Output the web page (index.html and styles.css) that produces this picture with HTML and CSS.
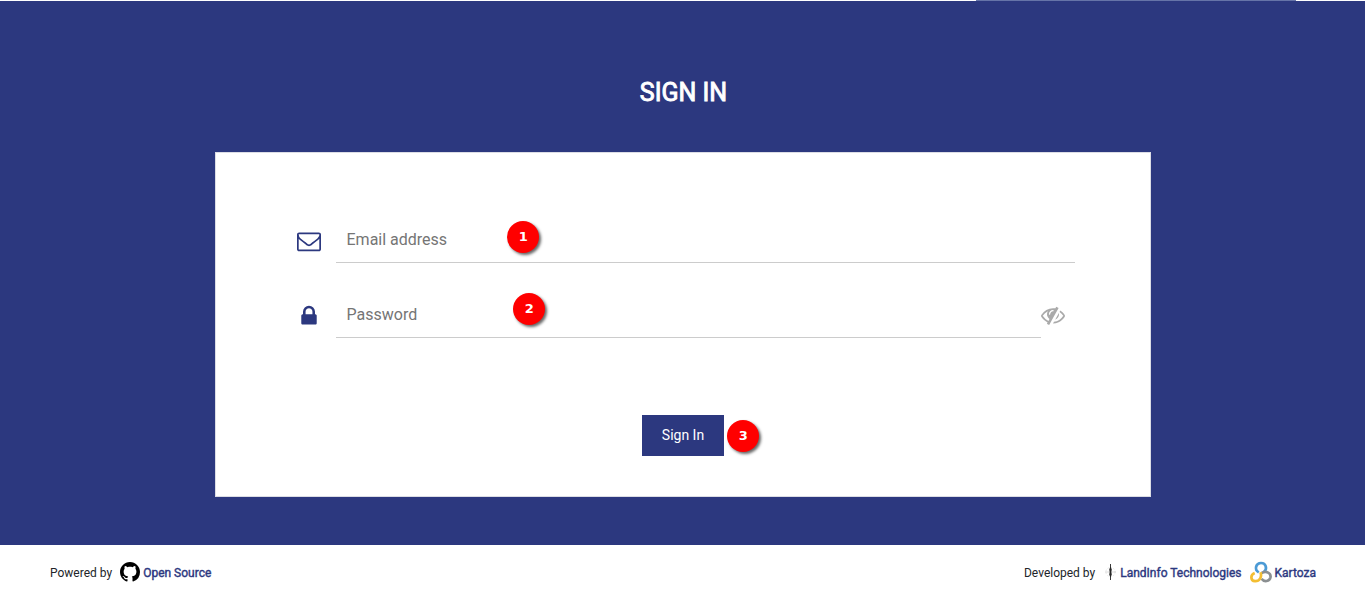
FILE: index.html
```html
<!DOCTYPE html>
<html lang="en">
<head>
<meta charset="utf-8">
<title>Sign In</title>
<link rel="stylesheet" href="styles.css">
</head>
<body>
<div class="topline"><div class="topline-mark"></div></div>
<main class="main">
  <h1 class="title">SIGN IN</h1>
  <form class="card">
    <div class="row">
      <svg class="icon icon-mail" viewBox="0 0 1792 1792"><path d="M1664 1504v-768q-32 36-69 66-268 206-426 338-51 43-83 67t-86.500 48.500-102.500 24.500h-2q-48 0-102.500-24.500t-86.500-48.500-83-67q-158-132-426-338-37-30-69-66v768q0 13 9.500 22.500t22.500 9.500h1472q13 0 22.500-9.500t9.500-22.500zm0-1051v-24.500l-.5-13-3-12.500-5.500-9-9-7.500-14-2.500h-1472q-13 0-22.500 9.500t-9.500 22.500q0 168 147 284 193 152 401 317 6 5 35 29.500t46 37.500 44.500 31.500 50.500 27.500 43 9h2q20 0 43-9t50.500-27.500 44.500-31.500 46-37.500 35-29.500q208-165 401-317 54-43 100.500-115.500t46.500-131.500zm128-37v1088q0 66-47 113t-113 47h-1472q-66 0-113-47t-47-113v-1088q0-66 47-113t113-47h1472q66 0 113 47t47 113z"/></svg>
      <div class="field"><input class="input" type="text" placeholder="Email address"></div>
    </div>
    <div class="row row-password">
      <svg class="icon icon-lock" viewBox="0 0 1792 1792"><path d="M640 768h512v-192q0-106-75-181t-181-75-181 75-75 181v192zm832 96v576q0 40-28 68t-68 28h-960q-40 0-68-28t-28-68v-576q0-40 28-68t68-28h32v-192q0-184 132-316t316-132 316 132 132 316v192h32q40 0 68 28t28 68z"/></svg>
      <div class="field"><input class="input" type="password" placeholder="Password"></div>
      <svg class="icon icon-eye" viewBox="0 0 1792 1792"><path d="M555 1335l78-141q-87-63-136-159t-49-203q0-121 61-225-229 117-381 353 167 258 427 375zm389-759q0-20-14-34t-34-14q-125 0-214.500 89.500t-89.500 214.500q0 20 14 34t34 14 34-14 14-34q0-86 61-147t147-61q20 0 34-14t14-34zm363-191q0 7-1 9-106 189-316 567t-315 566l-49 89q-10 16-28 16-12 0-134-70-16-10-16-28 0-12 44-87-143-65-263.500-173t-208.500-245q-20-31-20-69t20-69q153-235 380-371t496-136q89 0 180 17l54-97q10-16 28-16 5 0 18 6t31 15.500 33 18.500 31.500 18.500 19.500 11.500q16 10 16 27zm37 447q0 139-79 253.500t-209 164.500l280-502q8 45 8 84zm448 128q0 35-20 69-39 64-109 145-150 172-347.500 267t-419.500 95l74-132q212-18 392.500-137t301.500-307q-115-179-282-294l63-112q95 64 182.500 153t144.500 184q20 34 20 69z"/></svg>
    </div>
    <button class="submit" type="button">Sign In</button>
    <span class="badge badge-1">1</span>
    <span class="badge badge-2">2</span>
    <span class="badge badge-3">3</span>
  </form>
</main>
<footer class="footer">
  <div class="credits">
    <span class="label">Powered by</span>
    <svg class="github" viewBox="0 0 16 16"><path d="M8 0C3.580 0 0 3.580 0 8c0 3.540 2.290 6.530 5.470 7.590.4.070.55-.17.55-.38 0-.19-.01-.82-.01-1.490-2.010.37-2.530-.49-2.690-.94-.09-.23-.48-.94-.82-1.130-.28-.15-.68-.52-.01-.53.63-.01 1.080.58 1.230.82.72 1.210 1.870.87 2.330.66.07-.52.28-.87.51-1.070-1.780-.2-3.640-.89-3.640-3.950 0-.87.31-1.590.82-2.150-.08-.2-.36-1.020.08-2.120 0 0 .67-.21 2.200.82.64-.18 1.320-.27 2-.27s1.360.09 2 .27c1.530-1.040 2.200-.82 2.200-.82.44 1.100.16 1.920.08 2.120.51.56.82 1.270.82 2.150 0 3.070-1.870 3.750-3.650 3.950.29.25.54.73.54 1.480 0 1.070-.01 1.930-.01 2.200 0 .21.15.46.55.38A8.010 8.010 0 0 0 16 8c0-4.420-3.580-8-8-8z"/></svg>
    <a class="link">Open Source</a>
  </div>
  <div class="credits">
    <span class="label">Developed by</span>
    <svg class="compass" viewBox="0 0 12 18"><circle cx="6.500" cy="9" r="4.600" fill="none" stroke="#ddd" stroke-width=".7" stroke-dasharray="1.500 1.500"/><path d="M1 9h11" stroke="#ccc" stroke-width=".7"/><path d="M6.500 3.500l1.500 3-.6 2.500.6 2.500-1.500 3-1.500-3 .6-2.500-.6-2.500z" fill="#555"/><path d="M6.500 1v16" stroke="#222" stroke-width=".9"/></svg>
    <a class="link link-land">LandInfo Technologies</a>
    <svg class="kartoza" viewBox="0 0 22 22" fill="none" stroke-width="2.700"><path d="M8.800 11.400C3.800 8.500 6 2 11 2c5.200 0 6.500 6 3 8.700" stroke="#4b9ad5"/><path d="M11.500 12.200c5-3 9.600.1 9 4-.8 4.300-6.400 5.200-9 1.600" stroke="#8b8f91"/><path d="M10.400 11.200c2 5-1 9.200-5.400 9-4.500-.5-5-6.400-.3-8.200" stroke="#f3be32"/></svg>
    <a class="link">Kartoza</a>
  </div>
</footer>
</body>
</html>
```
FILE: styles.css
```css
* { box-sizing: border-box; }
body {
  margin: 0;
  height: 597px;
  overflow: hidden;
  background: #fff;
  font-family: Roboto, sans-serif;
  color: #212529;
}
.topline { height: 1px; padding-left: 976px; background: #fff; }
.topline-mark { width: 320px; height: 1px; background: #6674a8; }
.main {
  height: 544px;
  padding-top: 76px;
  background: #2c387f;
}
.title {
  margin: 0 0 43px;
  padding-left: 2px;
  font-size: 25px;
  line-height: 32px;
  font-weight: 400;
  text-align: center;
  color: #fff;
  -webkit-text-stroke: .9px #fff;
}
.card {
  position: relative;
  display: flex;
  flex-direction: column;
  width: 936px;
  height: 345px;
  margin: 0 0 0 215px;
  padding: 64px 75px 0 81px;
  border: 1px solid #dcdde5;
  background: #fff;
}
.row { display: flex; width: 778px; height: 46px; }
.row-password { margin-top: 29px; }
.icon { flex: none; width: 24px; height: 24px; fill: #2c387f; }
.icon-mail { margin-top: 12px; }
.icon-lock { margin-top: 12px; }
.icon-eye { margin: 11px 10px 0 0; fill: #aaa; }
.field { flex: 1; margin-left: 15px; border-bottom: 1px solid #ccc; }
.input {
  width: 100%;
  height: 45px;
  padding: 0 10.5px;
  border: 0;
  outline: 0;
  background: transparent;
  font: 16px Roboto, sans-serif;
}
.input::placeholder { color: #757575; }
.submit {
  align-self: flex-start;
  width: 82px;
  height: 41px;
  margin: 77px 0 0 345px;
  padding: 0 0 2px;
  border: 0;
  background: #2c387f;
  color: #fff;
  font: 14px Roboto, sans-serif;
}
.badge {
  position: absolute;
  width: 32px;
  height: 32px;
  border-radius: 50%;
  background: #f00;
  box-shadow: 2px 2px 3px rgba(0, 0, 0, .6);
  color: #fff;
  font: bold 13px/32px "DejaVu Sans", sans-serif;
  text-align: center;
}
.badge-1 { left: 291.4px; top: 67.6px; }
.badge-2 { left: 297.4px; top: 139.6px; }
.badge-3 { left: 511.4px; top: 266.6px; }
.footer {
  display: flex;
  justify-content: space-between;
  height: 52px;
  padding: 0 49px 0 50px;
  font-size: 12px;
}
.credits { display: flex; align-items: center; height: 54px; white-space: nowrap; }
.label, .link { padding-top: 2px; }
.link { color: #2c387f; -webkit-text-stroke: .4px #2c387f; }
.github { width: 20px; height: 20px; margin: 0 3px 0 8px; }
.compass { width: 12px; height: 18px; margin: 0 4px 0 9px; }
.kartoza { width: 22px; height: 22px; margin: 0 3px 0 8px; }
```
